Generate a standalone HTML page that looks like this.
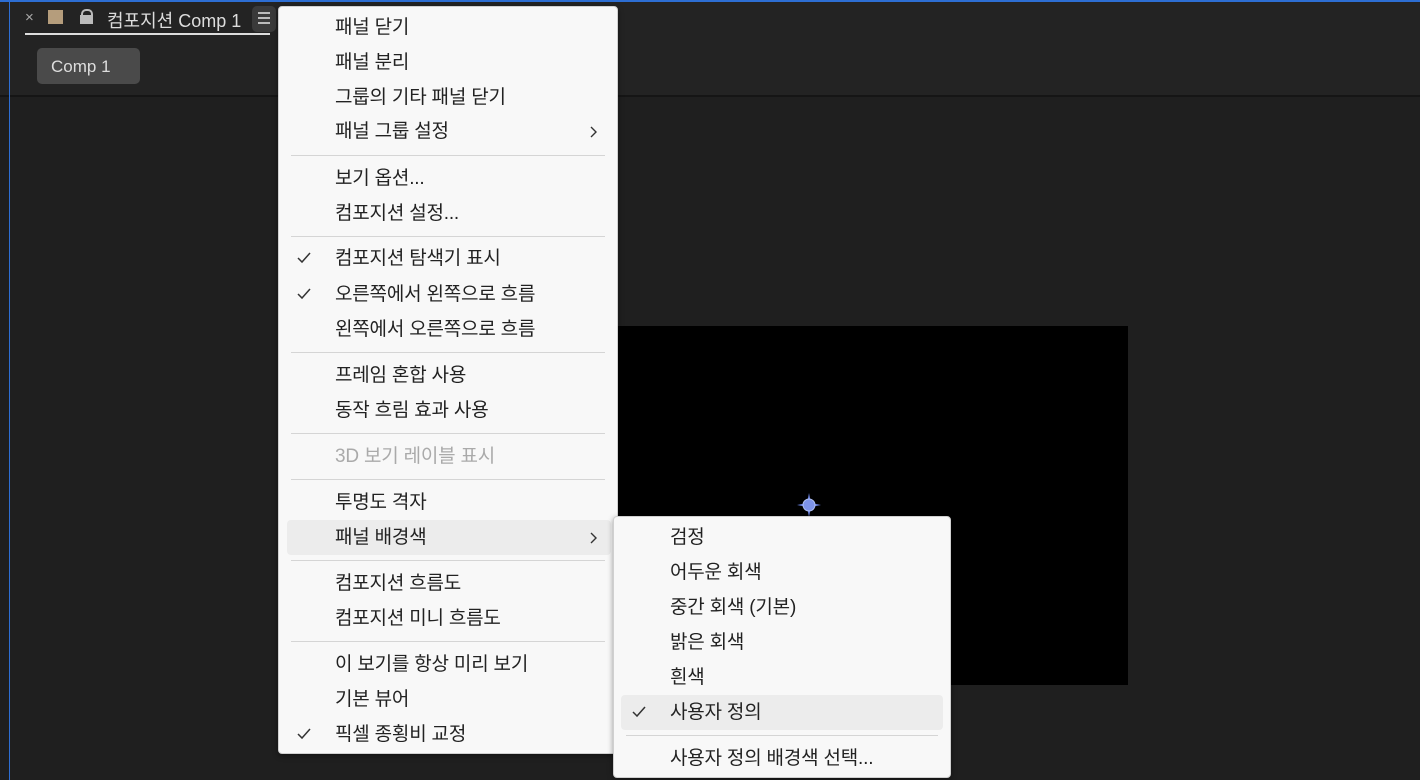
<!DOCTYPE html>
<html><head><meta charset="utf-8"><style>
body{margin:0;width:1420px;height:780px;background:#1f1f1f;position:relative;overflow:hidden;font-family:"Liberation Sans","Noto Sans CJK KR",sans-serif;}
.a{position:absolute}
.m{position:absolute;background:#f8f8f8;border:1px solid #d0d0d0;border-radius:4px;box-shadow:0 2px 6px rgba(0,0,0,.4)}
.i{position:absolute;left:56px;font-size:19px;color:#222;line-height:20px;transform:translateY(-10px);white-space:nowrap;letter-spacing:-0.2px}
.s{position:absolute;left:12px;right:12px;height:1px;background:#d5d5d5}
.c{position:absolute;left:18px;width:14px;height:12px;transform:translateY(-7px)}
.ar{position:absolute;right:20px;width:8px;height:12px;transform:translateY(-6px)}
</style></head><body>
<div class="a" style="left:0;top:0;width:1420px;height:95px;background:#232323"></div>
<div class="a" style="left:0;top:95px;width:1420px;height:2px;background:#151515"></div>
<div class="a" style="left:0;top:0;width:1420px;height:2px;background:#2d6ed3"></div>
<div class="a" style="left:9px;top:0;width:1px;height:780px;background:#2d6ed3"></div>
<div class="a" style="left:25px;top:9px;color:#aaa;font-size:15px">×</div>
<div class="a" style="left:48px;top:10px;width:15px;height:14px;background:#b59d7c"></div>
<div class="a" style="left:81px;top:9px;width:8px;height:6px;border:2px solid #bbb;border-bottom:none;border-radius:5px 5px 0 0;clip-path:inset(0 0 0 0)"></div>
<div class="a" style="left:80px;top:15px;width:13px;height:9px;background:#bbb"></div>
<div class="a" style="left:107px;top:7px;color:#ddd;font-size:18px">컴포지션 Comp 1</div>
<div class="a" style="left:25px;top:33px;width:245px;height:2px;background:#ddd"></div>
<div class="a" style="left:252px;top:6px;width:24px;height:26px;background:#3a3a3a;border-radius:5px"></div>
<div class="a" style="left:258px;top:12px;width:12px;height:2px;background:#bbb;box-shadow:0 5px 0 #bbb,0 10px 0 #bbb"></div>
<div class="a" style="left:37px;top:48px;width:103px;height:36px;background:#4a4a4a;border-radius:5px;color:#ddd;font-size:17px;line-height:38px;text-indent:14px">Comp 1</div>
<div class="a" style="left:600px;top:326px;width:528px;height:359px;background:#000"></div>
<svg class="a" style="left:796px;top:492px" width="26" height="26" viewBox="0 0 26 26"><path d="M13 1L15 11L25 13L15 15L13 25L11 15L1 13L11 11Z" fill="#6b82e0"/><circle cx="13" cy="13" r="6" fill="#7d93ea" stroke="#b0c0f5"/></svg>

<div class="m" style="left:278px;top:6px;width:338px;height:746px">
<div class="i" style="top:21px">패널 닫기</div>
<div class="i" style="top:56px">패널 분리</div>
<div class="i" style="top:91px">그룹의 기타 패널 닫기</div>
<div class="i" style="top:125px">패널 그룹 설정</div><svg class="ar" style="top:125px" viewBox="0 0 8 12"><path d="M2 1L7 6L2 11" stroke="#333" stroke-width="1.4" fill="none"/></svg>
<div class="s" style="top:148px"></div>
<div class="i" style="top:172px">보기 옵션...</div>
<div class="i" style="top:207px">컴포지션 설정...</div>
<div class="s" style="top:229px"></div>
<svg class="c" style="top:252px" viewBox="0 0 14 12"><path d="M1 6L5 10L13 1" stroke="#333" stroke-width="1.5" fill="none"/></svg><div class="i" style="top:252px">컴포지션 탐색기 표시</div>
<svg class="c" style="top:288px" viewBox="0 0 14 12"><path d="M1 6L5 10L13 1" stroke="#333" stroke-width="1.5" fill="none"/></svg><div class="i" style="top:288px">오른쪽에서 왼쪽으로 흐름</div>
<div class="i" style="top:323px">왼쪽에서 오른쪽으로 흐름</div>
<div class="s" style="top:345px"></div>
<div class="i" style="top:369px">프레임 혼합 사용</div>
<div class="i" style="top:404px">동작 흐림 효과 사용</div>
<div class="s" style="top:426px"></div>
<div class="i" style="top:450px;color:#aaa">3D 보기 레이블 표시</div>
<div class="s" style="top:472px"></div>
<div class="i" style="top:496px">투명도 격자</div>
<div class="a" style="left:8px;top:513px;width:324px;height:35px;background:#ececec;border-radius:4px"></div>
<div class="i" style="top:531px">패널 배경색</div><svg class="ar" style="top:531px" viewBox="0 0 8 12"><path d="M2 1L7 6L2 11" stroke="#333" stroke-width="1.4" fill="none"/></svg>
<div class="s" style="top:553px"></div>
<div class="i" style="top:577px">컴포지션 흐름도</div>
<div class="i" style="top:612px">컴포지션 미니 흐름도</div>
<div class="s" style="top:634px"></div>
<div class="i" style="top:658px">이 보기를 항상 미리 보기</div>
<div class="i" style="top:693px">기본 뷰어</div>
<svg class="c" style="top:728px" viewBox="0 0 14 12"><path d="M1 6L5 10L13 1" stroke="#333" stroke-width="1.5" fill="none"/></svg><div class="i" style="top:728px">픽셀 종횡비 교정</div>
</div>

<div class="m" style="left:613px;top:516px;width:336px;height:260px">
<div class="i" style="top:21px">검정</div>
<div class="i" style="top:56px">어두운 회색</div>
<div class="i" style="top:91px">중간 회색 (기본)</div>
<div class="i" style="top:126px">밝은 회색</div>
<div class="i" style="top:161px">흰색</div>
<div class="a" style="left:7px;top:178px;width:322px;height:35px;background:#ececec;border-radius:4px"></div>
<svg class="c" style="top:196px" viewBox="0 0 14 12"><path d="M1 6L5 10L13 1" stroke="#333" stroke-width="1.5" fill="none"/></svg><div class="i" style="top:196px">사용자 정의</div>
<div class="s" style="top:218px"></div>
<div class="i" style="top:242px">사용자 정의 배경색 선택...</div>
</div>
</body></html>
